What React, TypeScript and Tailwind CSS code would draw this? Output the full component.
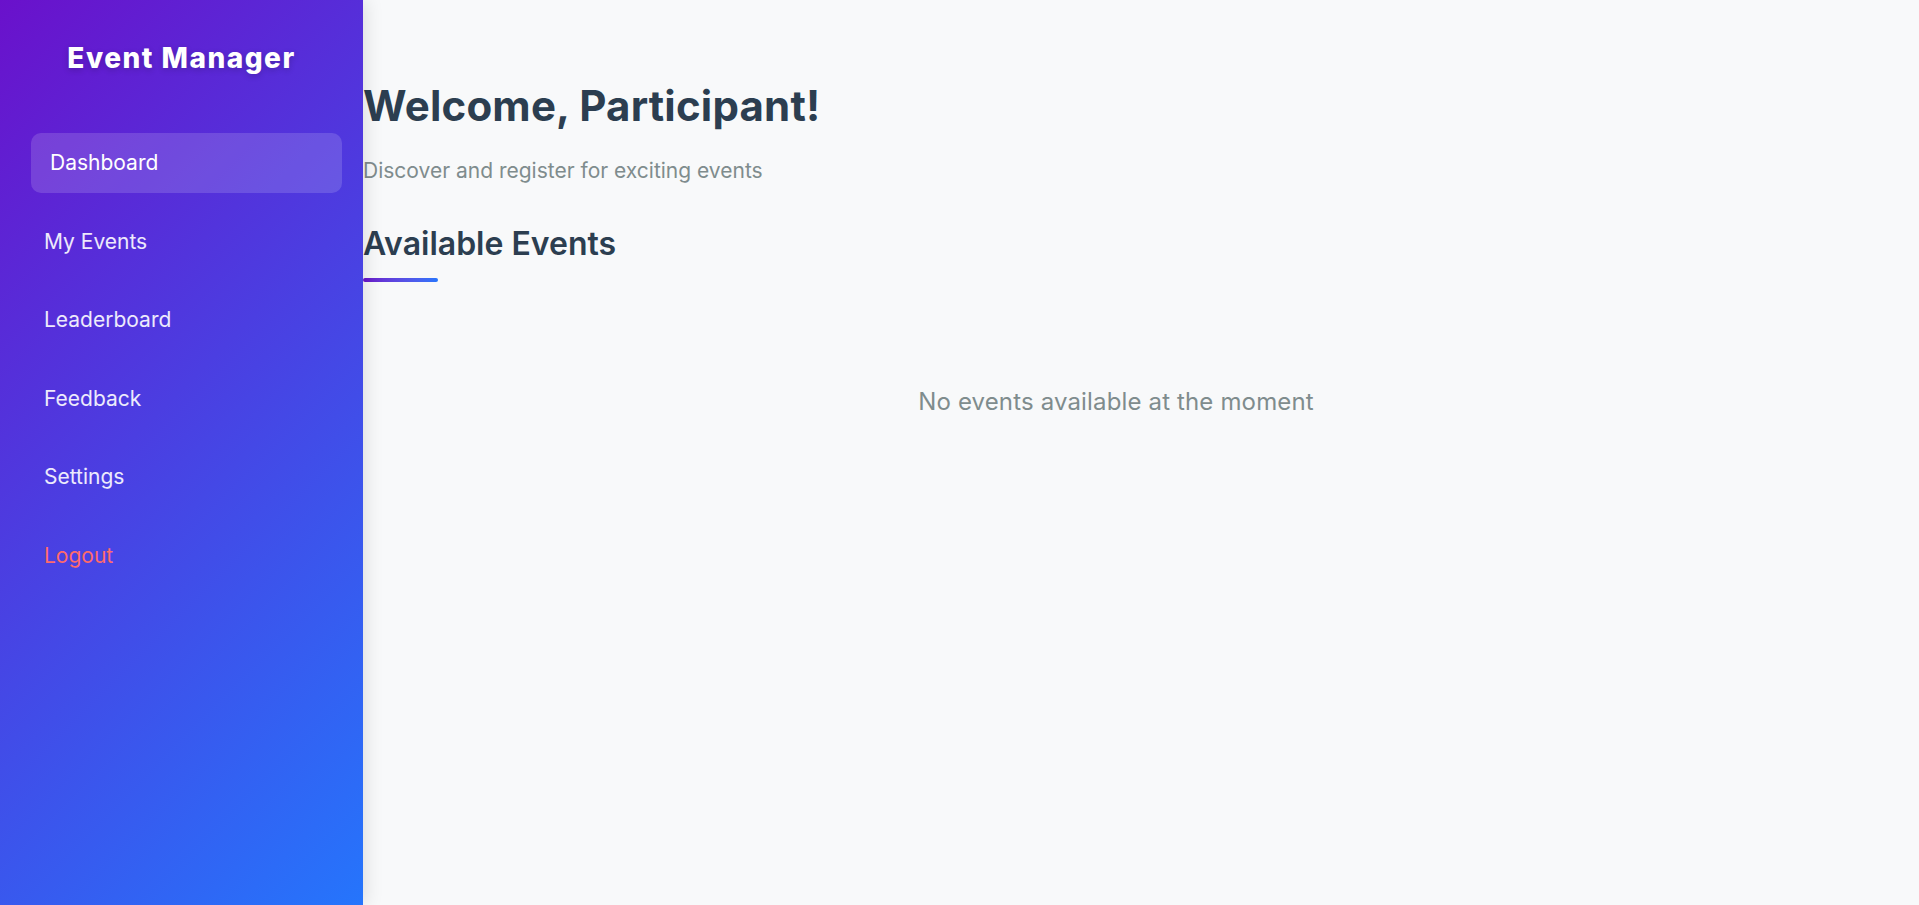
import React from 'react';

const NAV_ITEMS = ['Dashboard', 'My Events', 'Leaderboard', 'Feedback', 'Settings'];

function Sidebar() {
  return (
    <aside className="relative z-10 flex w-[363px] shrink-0 flex-col bg-[linear-gradient(135deg,#6a11cb_0%,#2575fc_100%)] px-[26px] pt-[36px] shadow-[2px_0_18px_rgba(0,0,0,0.12)]">
      <h2 className="text-center text-[28px] font-extrabold leading-[44px] tracking-[1.5px] text-white [text-shadow:0_2px_6px_rgba(0,0,0,0.2)]">
        Event Manager
      </h2>
      <nav className="mt-[53px] flex flex-col gap-[18.5px]">
        {NAV_ITEMS.map((item, i) => (
          <a
            key={item}
            className={
              i === 0
                ? 'flex h-[60px] translate-x-[5px] items-center rounded-[10px] bg-white/15 px-[19px] text-[21px] text-white'
                : 'flex h-[60px] items-center rounded-[10px] px-[18px] text-[21px] text-white/90'
            }
          >
            {item}
          </a>
        ))}
        <a className="flex h-[60px] items-center rounded-[10px] px-[18px] text-[21px] text-[#ff6b6b]">Logout</a>
      </nav>
    </aside>
  );
}

export default function App() {
  return (
    <div className="flex h-[905px] w-full overflow-hidden bg-[#f8f9fa] font-['Inter',sans-serif]">
      <Sidebar />
      <main className="flex flex-1 flex-col pr-[50px] pt-[76px]">
        <h1 className="text-[42px] font-bold leading-[60px] tracking-[0.2px] text-[#2c3e50]">Welcome, Participant!</h1>
        <p className="mt-[21px] text-[21px] leading-[28px] text-[#7f8c8d]">Discover and register for exciting events</p>
        <h2 className="mt-[37px] text-[32px] font-semibold leading-[44px] text-[#2c3e50]">Available Events</h2>
        <div className="mt-[12px] h-[4px] w-[75px] rounded-full bg-gradient-to-r from-[#6a11cb] to-[#2575fc]" />
        <p className="mt-[105px] text-center text-[24px] leading-[30px] tracking-[0.15px] text-[#7f8c8d]">No events available at the moment</p>
      </main>
    </div>
  );
}
